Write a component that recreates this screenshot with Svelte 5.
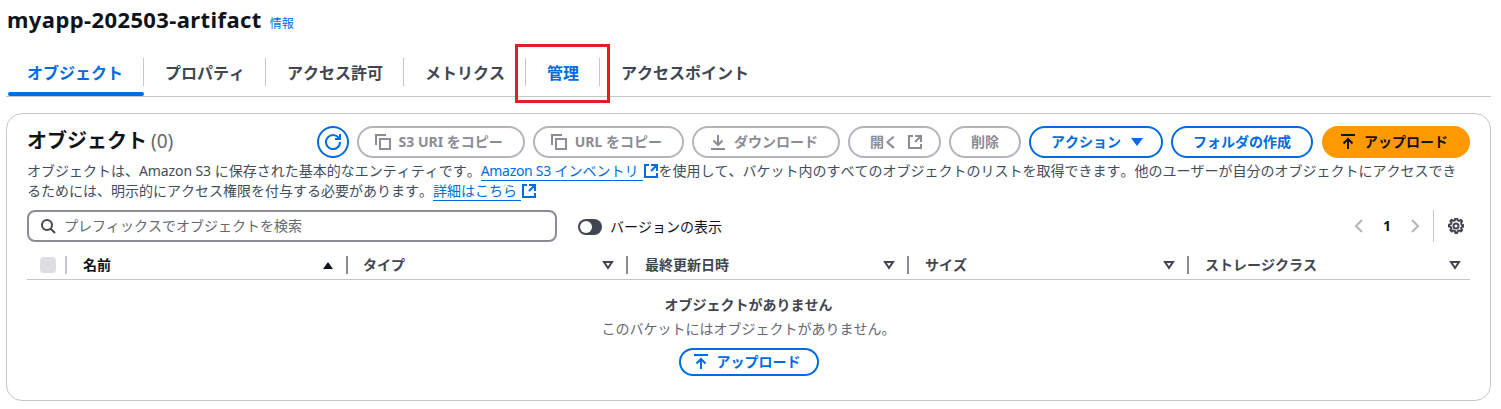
<script>
  const tabs = [
    { label: 'オブジェクト', active: true },
    { label: 'プロパティ' },
    { label: 'アクセス許可' },
    { label: 'メトリクス' },
    { label: '管理', hover: true },
    { label: 'アクセスポイント' }
  ];
  const columns = [
    { label: '名前', sorted: true },
    { label: 'タイプ' },
    { label: '最終更新日時' },
    { label: 'サイズ' },
    { label: 'ストレージクラス' }
  ];
</script>

{#snippet uploadIcon()}
  <svg class="icon" viewBox="0 0 16 16"><path d="M1 1h14M12.500 9.500 8 5 3.500 9.500M8 15V5" /></svg>
{/snippet}

{#snippet externalIcon()}
  <svg class="icon ext" viewBox="0 0 16 16"><path d="M14 8V2H8M14 2 8 8M6 2H2v12h12v-4" /></svg>
{/snippet}

{#snippet copyIcon()}
  <svg class="icon" viewBox="0 0 16 16"><path d="M11 1H1v10" /><rect x="5" y="5" width="10" height="10" /></svg>
{/snippet}

<div class="page">
  <div class="title">
    <h1>myapp-202503-artifact</h1>
    <span class="info">情報</span>
  </div>

  <div class="tabs">
    {#each tabs as tab}
      <div class="tab" class:active={tab.active} class:hover={tab.hover}>{tab.label}</div>
    {/each}
  </div>

  <section class="card">
    <div class="head">
      <h2>オブジェクト<span class="count">(0)</span></h2>
      <div class="actions">
        <button class="btn refresh" aria-label="更新">
          <svg class="icon" viewBox="0 0 16 16"><path d="M10 5h5V0M15 8a7 7 0 1 1-.7-3" /></svg>
        </button>
        <button class="btn off wide">{@render copyIcon()}S3 URI をコピー</button>
        <button class="btn off wide">{@render copyIcon()}URL をコピー</button>
        <button class="btn off wide">
          <svg class="icon" viewBox="0 0 16 16"><path d="M1 15h14M3.500 6.500 8 11l4.500-4.500M8 1v10" /></svg>
          ダウンロード
        </button>
        <button class="btn off trailing open">開く
          <svg class="icon" viewBox="0 0 16 16"><path d="M14 8V2H8M14 2 8 8M6 2H2v12h12v-4" /></svg>
        </button>
        <button class="btn off">削除</button>
        <button class="btn normal trailing">アクション
          <svg class="caret" viewBox="0 0 16 16"><path d="M2 4h12L8 12z" /></svg>
        </button>
        <button class="btn normal">フォルダの作成</button>
        <button class="btn primary wide">{@render uploadIcon()}アップロード</button>
      </div>
    </div>

    <p class="desc">オブジェクトは、<span class="lead">Amazon S3</span> に保存された基本的なエンティティです。<a href="#inv"><span class="latin">Amazon S3</span> インベントリ</a>{@render externalIcon()}を使用して、バケット内のすべてのオブジェクトのリストを取得できます。他のユーザーが自分のオブジェクトにアクセスできるためには、明示的にアクセス権限を付与する必要があります。<a href="#more">詳細はこちら</a>{@render externalIcon()}</p>

    <div class="filter">
      <div class="search">
        <svg class="icon" viewBox="0 0 16 16"><circle cx="7" cy="7" r="5" /><path d="m15 15-4.500-4.500" /></svg>
        <span>プレフィックスでオブジェクトを検索</span>
      </div>
      <div class="toggle"><span class="track"><span class="knob"></span></span>バージョンの表示</div>
      <div class="pager">
        <svg class="icon chev" viewBox="0 0 16 16"><path d="M11 2 5 8l6 6" /></svg>
        <b>1</b>
        <svg class="icon chev" viewBox="0 0 16 16"><path d="m5 2 6 6-6 6" /></svg>
        <span class="gear">
          <svg class="icon" viewBox="0 0 16 16">
            <path d="M13.300 5.600c-.3-.7 0-1.500.6-2 .2-.1.3-.4.1-.6l-1-1c-.2-.2-.5-.1-.7.1-.4.6-1.200.9-2 .6-.7-.3-1.100-1.100-.9-1.800 0-.3-.1-.5-.4-.5H7.500c-.3 0-.4.200-.4.500.2.700-.2 1.500-.9 1.800-.8.300-1.600 0-2-.6-.2-.2-.5-.3-.7-.1l-1 1c-.2.200-.1.500.1.600.6.500.9 1.300.6 2-.3.700-1.100 1.100-1.800.9-.3 0-.5.100-.5.400v1.500c0 .3.200.4.500.4.700-.2 1.500.2 1.800.9.300.8 0 1.600-.6 2-.2.200-.3.500-.1.700l1 1c.2.200.5.100.7-.1.400-.6 1.200-.9 2-.6.700.3 1.100 1.100.9 1.800 0 .3.100.5.400.5h1.500c.3 0 .4-.2.400-.5-.2-.7.200-1.500.9-1.800.8-.3 1.600 0 2 .6.200.2.500.3.700.1l1-1c.2-.2.100-.5-.1-.7-.6-.4-.9-1.200-.6-2 .3-.7 1.100-1.100 1.800-.9.300 0 .5-.1.500-.4V7.500c0-.3-.2-.4-.5-.4-.7.200-1.500-.2-1.800-.9z" />
            <circle cx="8" cy="8" r="2.500" />
          </svg>
        </span>
      </div>
    </div>

    <div class="thead">
      <div class="th check"><span class="box"></span></div>
      {#each columns as col}
        <div class="th" class:sorted={col.sorted}>
          <span>{col.label}</span>
          {#if col.sorted}
            <svg class="sort" viewBox="0 0 16 16"><path class="fill" d="M3 12h10L8 5z" /></svg>
          {:else}
            <svg class="sort" viewBox="0 0 16 16"><path d="M4 5h8l-4 6z" /></svg>
          {/if}
        </div>
      {/each}
    </div>

    <div class="empty">
      <strong>オブジェクトがありません</strong>
      <span>このバケットにはオブジェクトがありません。</span>
      <button class="btn normal small">{@render uploadIcon()}アップロード</button>
    </div>
  </section>

  <div class="highlight"></div>
</div>

<style>
  :global(body) {
    background: #fff;
  }

  .page {
    position: relative;
    height: 409px;
    padding: 7px 10px 0 6px;
    box-sizing: border-box;
    overflow: hidden;
    font-family: "Noto Sans", "Noto Sans CJK JP", sans-serif;
    font-size: 14px;
    line-height: 20px;
    font-kerning: none;
    color: #0f141a;
  }

  .title {
    display: flex;
    align-items: baseline;
    gap: 8px;
    height: 24px;
    padding-left: 1px;
  }

  h1 {
    margin: 0;
    font-size: 22px;
    line-height: 24px;
    font-weight: 700;
    letter-spacing: 0.4px;
  }

  .info {
    font-size: 12px;
    line-height: 16px;
    color: #006ce0;
  }

  .tabs {
    display: flex;
    height: 47px;
    margin-top: 18px;
    border-bottom: 1px solid #c6c6cd;
    padding-left: 2px;
  }

  .tab {
    position: relative;
    padding: 13px 21px 0 21px;
    font-size: 16px;
    line-height: 22px;
    font-weight: 700;
    color: #424650;
  }

  .tab::after {
    content: "";
    position: absolute;
    right: 0;
    top: 9px;
    height: 28px;
    border-right: 1px solid #c6c6cd;
  }

  .tab:last-child::after {
    display: none;
  }

  .tab.active {
    padding: 13px 21px 0 19px;
    color: #006ce0;
  }

  .tab.active::before {
    content: "";
    position: absolute;
    left: 0;
    right: 0;
    bottom: 0;
    height: 4px;
    border-radius: 2px;
    background: #006ce0;
  }

  .tab.hover {
    color: #006ce0;
  }

  .card {
    margin-top: 16px;
    height: 288px;
    box-sizing: border-box;
    padding: 12px 20px 0 20px;
    border: 1px solid #c6c6cd;
    border-radius: 16px;
  }

  .head {
    display: flex;
    align-items: center;
    justify-content: space-between;
    height: 32px;
  }

  h2 {
    margin: -2px 0 0;
    font-size: 20px;
    line-height: 24px;
    font-weight: 700;
  }

  .count {
    margin-left: 4px;
    font-size: 19px;
    font-weight: 400;
    color: #656871;
  }

  .actions {
    display: flex;
    gap: 8px;
  }

  .btn {
    display: inline-flex;
    align-items: center;
    justify-content: center;
    gap: 8px;
    height: 32px;
    padding: 0 20px;
    box-sizing: border-box;
    border: 2px solid #006ce0;
    border-radius: 20px;
    background: #fff;
    font: inherit;
    font-kerning: none;
    font-weight: 700;
    white-space: nowrap;
  }

  .btn.normal {
    color: #006ce0;
  }

  .btn.off {
    border-color: #b4b4bb;
    color: #8c8c94;
  }

  .btn.primary {
    margin-left: 1px;
    border-color: #ff9900;
    background: #ff9900;
    color: #0f141a;
  }

  .btn.wide {
    padding: 0 20px 0 16px;
  }

  .btn.trailing {
    padding: 0 16px 0 20px;
  }

  .btn.open {
    gap: 9px;
  }

  .btn.refresh {
    width: 32px;
    padding: 0;
    border: none;
    color: #006ce0;
    border-radius: 50%;
    box-shadow: inset 0 0 0 2px #006ce0;
  }

  .btn.small {
    height: 28px;
    padding: 0 16px 0 12px;
    margin-top: 7px;
  }

  .icon {
    flex: none;
    width: 16px;
    height: 16px;
    fill: none;
    stroke: currentColor;
    stroke-width: 2;
  }

  .caret {
    width: 16px;
    height: 16px;
    fill: currentColor;
  }

  .desc {
    margin: 3px 0 0;
    padding-right: 6px;
    color: #414d5c;
  }

  .lead {
    letter-spacing: -0.1px;
  }

  .latin {
    letter-spacing: -0.3px;
  }

  .desc a {
    padding-right: 4px;
    color: #006ce0;
    text-decoration: none;
    border-bottom: 1px solid #006ce0;
  }

  .desc .ext {
    width: 16px;
    height: 16px;
    color: #006ce0;
    vertical-align: -3px;
  }

  .filter {
    display: flex;
    align-items: center;
    margin-top: 9px;
    height: 32px;
  }

  .search {
    display: flex;
    align-items: center;
    gap: 8px;
    width: 530px;
    height: 32px;
    box-sizing: border-box;
    padding: 0 11px;
    border: 2px solid #8c8c94;
    border-radius: 8px;
    color: #424650;
  }

  .search span {
    color: #656871;
  }

  .toggle {
    display: flex;
    align-items: center;
    gap: 8px;
    margin-left: 21px;
    padding-top: 2px;
    color: #0f141a;
  }

  .track {
    display: block;
    width: 24px;
    height: 16px;
    border-radius: 8px;
    background: #424650;
    position: relative;
  }

  .knob {
    position: absolute;
    left: 2px;
    top: 2px;
    width: 12px;
    height: 12px;
    border-radius: 50%;
    background: #fff;
  }

  .pager {
    display: flex;
    align-items: center;
    margin-left: auto;
    height: 32px;
    gap: 16px;
    font-size: 14px;
  }

  .pager .chev {
    color: #b4b4bb;
  }

  .gear {
    display: flex;
    align-items: center;
    height: 32px;
    margin-left: -6px;
    padding: 0 6px 0 14px;
    border-left: 1px solid #c6c6cd;
    color: #424650;
  }

  .thead {
    display: grid;
    grid-template-columns: 40px 280px 280px 281px 280px 1fr;
    height: 29px;
    margin-top: 8px;
    border-bottom: 1px solid #c6c6cd;
  }

  .th {
    position: relative;
    display: flex;
    align-items: center;
    justify-content: space-between;
    padding: 0 11px 0 16px;
    font-weight: 700;
    color: #424650;
  }

  .th:nth-child(4) {
    padding-left: 18px;
  }

  .th:nth-child(n + 5) {
    padding-left: 17px;
  }

  .th:last-child {
    padding-right: 7px;
  }

  .th.sorted {
    color: #0f141a;
  }

  .th::after {
    content: "";
    position: absolute;
    right: -1px;
    top: 6px;
    height: 18px;
    border-right: 2px solid #8c8c94;
  }

  .th:last-child::after {
    display: none;
  }

  .th.check {
    padding: 0 0 0 13px;
  }

  .th.check::after {
    right: 0;
    border-right-color: #c6c6cd;
  }

  .box {
    width: 16px;
    height: 16px;
    border-radius: 4px;
    background: #dedee3;
  }

  .sort {
    width: 16px;
    height: 16px;
    fill: none;
    stroke: #424650;
    stroke-width: 2;
  }

  .sort .fill {
    fill: #0f141a;
    stroke: none;
  }

  .empty {
    display: flex;
    flex-direction: column;
    align-items: center;
    padding-top: 13px;
    line-height: 24px;
    color: #656871;
  }

  .empty strong {
    font-weight: 700;
    color: #424650;
  }

  .highlight {
    position: absolute;
    left: 515px;
    top: 44px;
    width: 95px;
    height: 59px;
    box-sizing: border-box;
    border: 3px solid #e81c24;
  }
</style>
